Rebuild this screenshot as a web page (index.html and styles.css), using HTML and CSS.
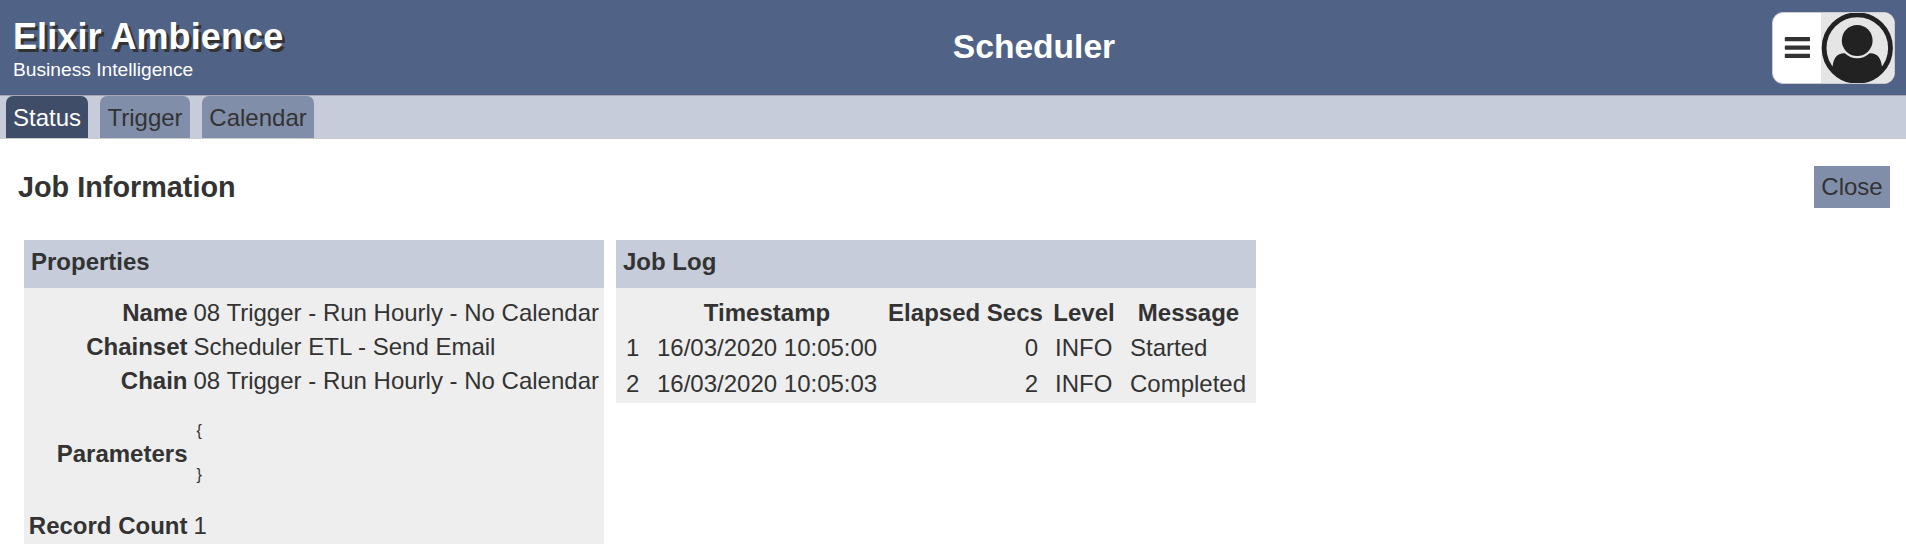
FILE: index.html
```
<!DOCTYPE html>
<html lang="en">
<head>
<meta charset="utf-8">
<title>Scheduler</title>
<link rel="stylesheet" href="styles.css">
</head>
<body>
<header class="header">
  <div class="brand">
    <div class="brand-name">Elixir Ambience</div>
    <div class="brand-tag">Business Intelligence</div>
  </div>
  <h1 class="page-title">Scheduler</h1>
  <div class="user-area">
    <div class="user-menu">
      <svg class="burger" viewBox="0 0 48 70" fill="#333">
        <rect x="11.800" y="24" width="25.200" height="4.300" rx="0.700"/>
        <rect x="11.800" y="32.400" width="25.200" height="4.300" rx="0.700"/>
        <rect x="11.800" y="40.700" width="25.200" height="4.300" rx="0.700"/>
      </svg>
      <svg class="avatar" viewBox="0 0 73 70">
        <defs><clipPath id="disc"><circle cx="36.300" cy="35" r="34"/></clipPath></defs>
        <rect width="73" height="70" fill="#e5e5e5"/>
        <g clip-path="url(#disc)"><path d="M8 73V60L11.500 54C12.500 45 16 40.200 23 40.200H49.500C56.500 40.200 60 45 61 54L64.500 60V73z" fill="#222"/></g>
        <circle cx="36.200" cy="27.500" r="17.800" fill="#e5e5e5"/>
        <circle cx="36.200" cy="27.500" r="15.400" fill="#222"/>
        <circle cx="36.300" cy="35" r="33.200" fill="none" stroke="#222" stroke-width="4.800"/>
      </svg>
    </div>
  </div>
</header>
<nav class="tabs">
  <a class="tab active">Status</a>
  <a class="tab">Trigger</a>
  <a class="tab">Calendar</a>
</nav>
<main>
  <div class="toolbar">
    <h2 class="heading">Job Information</h2>
    <button class="close">Close</button>
  </div>
  <div class="cards">
    <section class="card properties">
      <h3 class="card-title">Properties</h3>
      <dl class="props">
        <dt>Name</dt><dd>08 Trigger - Run Hourly - No Calendar</dd>
        <dt>Chainset</dt><dd>Scheduler ETL - Send Email</dd>
        <dt>Chain</dt><dd>08 Trigger - Run Hourly - No Calendar</dd>
        <dt>Parameters</dt><dd><pre class="params">{

}</pre></dd>
        <dt>Record Count</dt><dd>1</dd>
      </dl>
    </section>
    <section class="card job-log">
      <h3 class="card-title">Job Log</h3>
      <table class="log">
        <colgroup><col class="c-num"><col class="c-time"><col class="c-secs"><col class="c-level"><col class="c-msg"></colgroup>
        <thead><tr><th></th><th>Timestamp</th><th>Elapsed Secs</th><th>Level</th><th>Message</th></tr></thead>
        <tbody>
          <tr><td>1</td><td>16/03/2020 10:05:00</td><td class="num">0</td><td>INFO</td><td>Started</td></tr>
          <tr><td>2</td><td>16/03/2020 10:05:03</td><td class="num">2</td><td>INFO</td><td>Completed</td></tr>
        </tbody>
      </table>
    </section>
  </div>
</main>
</body>
</html>
```
FILE: styles.css
```
* { box-sizing: border-box; }
body {
  margin: 0;
  background: #fff;
  color: #333;
  font: 24px/34px "Liberation Sans", Arial, sans-serif;
}
h1, h2, h3, dl, dd, pre { margin: 0; }
.header {
  display: grid;
  grid-template-columns: 1fr auto 1fr;
  height: 96px;
  background: #506286;
  border-bottom: 1px solid #a3a6b1;
  color: #fff;
}
.brand { padding: 15px 0 0 13px; }
.brand-name {
  font-size: 36px;
  font-weight: bold;
  line-height: 43px;
  letter-spacing: 0.1px;
  text-shadow: 3px 3px 0 #333;
}
.brand-tag { font-size: 19.2px; line-height: 23px; }
.page-title { font-size: 33.6px; line-height: 40px; padding: 27px 0 0 162px; }
.user-area { display: flex; justify-content: flex-end; padding: 12px 11px 0 0; }
.user-menu {
  display: flex;
  width: 123px;
  height: 72px;
  overflow: hidden;
  border: 1px solid #ccc;
  border-radius: 11px;
  background: #fff;
}
.burger { width: 48px; height: 70px; }
.avatar { width: 73px; height: 70px; }
.tabs {
  display: flex;
  gap: 12px;
  height: 43px;
  padding-left: 6px;
  background: #c6ccda;
  border-bottom: 1px solid #ccc;
}
.tab {
  height: 42px;
  padding: 0 7.400px;
  line-height: 43px;
  border-radius: 7px 7px 0 0;
  background: #818eaa;
}
.tab.active { padding: 0 7px; background: #404d68; color: #fff; }
.toolbar {
  display: flex;
  justify-content: space-between;
  padding: 27px 16px 0 18px;
}
.heading { font-size: 28.8px; line-height: 42px; }
.close {
  width: 76px;
  height: 42px;
  padding: 0;
  border: 0;
  background: #818eaa;
  color: #333;
  font: inherit;
}
.cards {
  display: flex;
  align-items: flex-start;
  gap: 12px;
  padding: 32px 24px 0;
}
.card { background: #eee; }
.properties { width: 580px; }
.job-log { width: 640px; padding-bottom: 1px; }
.card-title {
  height: 48px;
  padding-left: 7px;
  background: #c6ccda;
  font-size: 24px;
  line-height: 44px;
}
.props {
  display: grid;
  grid-template-columns: 163.500px auto;
  grid-template-rows: 34px 34px 34px 111px 34px;
  column-gap: 6px;
  align-items: center;
  padding: 8px 0 1px;
  white-space: nowrap;
}
.props dt { font-weight: bold; text-align: right; }
.params { padding: 0 0 2px 3px; font: 16px/22px "Liberation Sans", Arial, sans-serif; }
.log {
  table-layout: fixed;
  width: 638px;
  margin: 8px 0 0 1px;
  border-collapse: collapse;
  line-height: 34px;
}
.log th, .log td { padding: 0; white-space: nowrap; }
.log th { height: 34px; }
.log td { height: 36px; padding: 0 8px; text-align: left; }
.log .num { text-align: right; }
.log td:nth-child(4), .log td:first-child { padding-left: 9px; }
.c-num { width: 32px; }
.c-time { width: 236px; }
.c-secs { width: 161px; }
.c-level { width: 76px; }
.c-msg { width: 133px; }
```
